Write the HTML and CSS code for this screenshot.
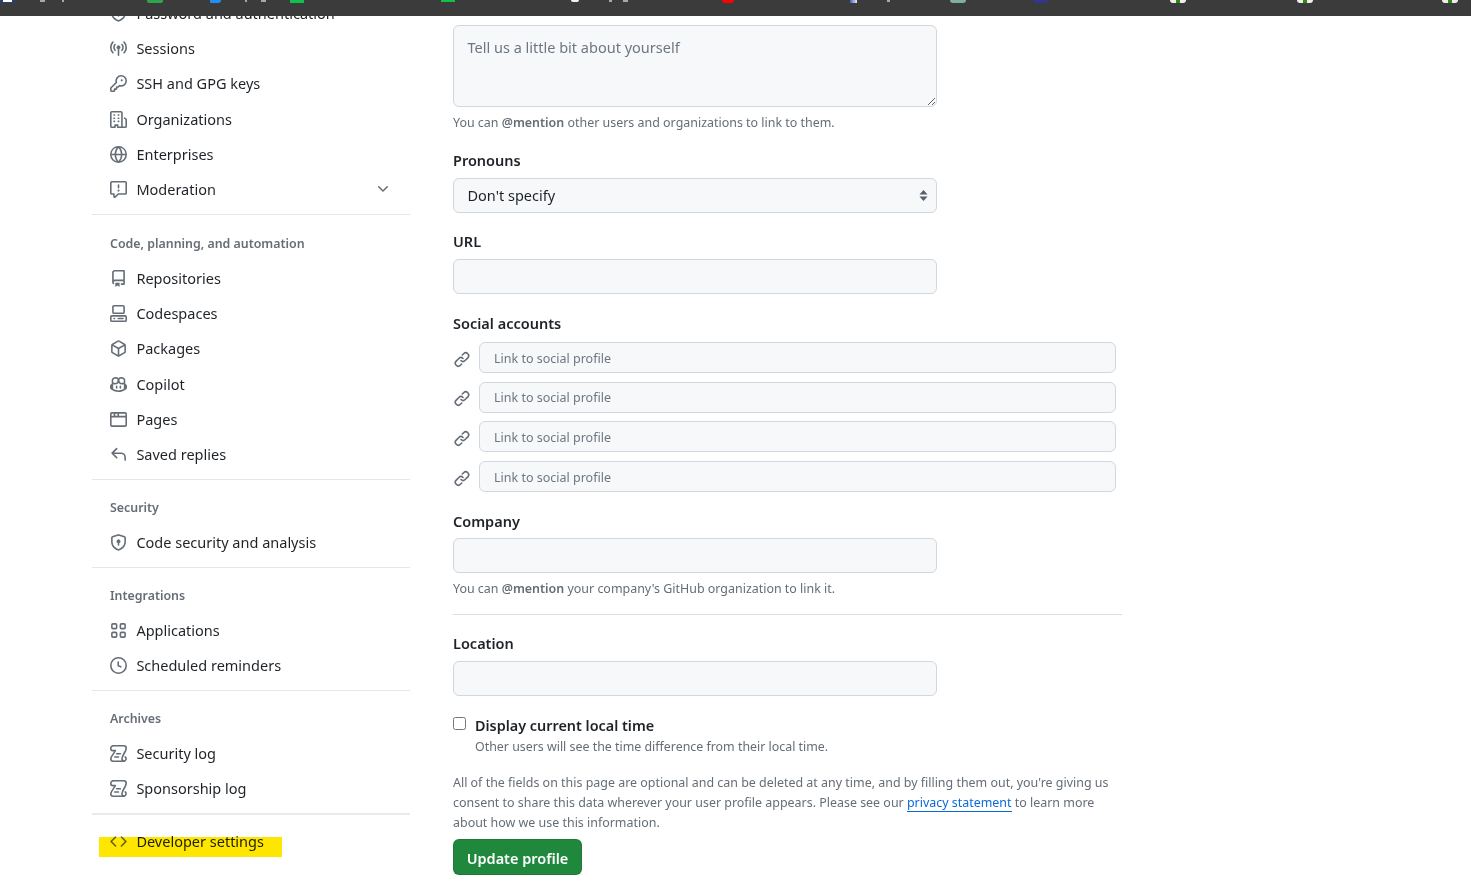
FILE: index.html
```html
<!DOCTYPE html>
<html lang="en">
<head>
<meta charset="utf-8">
<title>Public profile</title>
<link rel="stylesheet" href="styles.css">
</head>
<body>
<svg class="sprite" aria-hidden="true">
  <symbol id="i-shield" viewBox="0 0 16 16"><path d="M7.467.133a1.748 1.748 0 0 1 1.066 0l5.25 1.68A1.75 1.75 0 0 1 15 3.48V7c0 1.566-.32 3.182-1.303 4.682-.983 1.498-2.585 2.813-5.032 3.855a1.697 1.697 0 0 1-1.33 0c-2.447-1.042-4.049-2.357-5.032-3.855C1.32 10.182 1 8.566 1 7V3.48a1.75 1.75 0 0 1 1.217-1.667Zm.61 1.429a.25.25 0 0 0-.153 0l-5.25 1.68a.25.25 0 0 0-.174.238V7c0 1.358.275 2.666 1.057 3.86.784 1.194 2.121 2.34 4.366 3.297a.196.196 0 0 0 .154 0c2.245-.956 3.582-2.104 4.366-3.298C13.225 9.666 13.5 8.36 13.5 7V3.48a.251.251 0 0 0-.174-.237l-5.25-1.68ZM8.75 8.582v1.668a.75.75 0 0 1-1.5 0V8.582a1.75 1.75 0 1 1 1.5 0Z"/></symbol>
  <symbol id="i-broadcast" viewBox="0 0 16 16"><path d="M8.75 8.582v5.668a.75.75 0 0 1-1.5 0V8.582a1.75 1.75 0 1 1 1.5 0Zm3.983-7.125a.75.75 0 0 1 1.06.026A7.976 7.976 0 0 1 16 7c0 2.139-.84 4.083-2.207 5.517a.75.75 0 1 1-1.086-1.034A6.474 6.474 0 0 0 14.5 7a6.474 6.474 0 0 0-1.793-4.483.75.75 0 0 1 .026-1.06Zm-9.466 0a.75.75 0 0 1 .026 1.06A6.474 6.474 0 0 0 1.5 7a6.47 6.47 0 0 0 1.793 4.483.75.75 0 0 1-1.086 1.034A7.973 7.973 0 0 1 0 7c0-2.139.84-4.083 2.207-5.517a.75.75 0 0 1 1.06-.026Zm8.556 2.321A4.988 4.988 0 0 1 13 7a4.988 4.988 0 0 1-1.177 3.222.75.75 0 1 1-1.146-.967A3.487 3.487 0 0 0 11.5 7c0-.86-.309-1.645-.823-2.255a.75.75 0 0 1 1.146-.967Zm-6.492.958A3.48 3.48 0 0 0 4.5 7a3.48 3.48 0 0 0 .823 2.255.75.75 0 0 1-1.146.967A4.981 4.981 0 0 1 3 7a4.98 4.98 0 0 1 1.188-3.236.75.75 0 1 1 1.143.972Z"/></symbol>
  <symbol id="i-key" viewBox="0 0 16 16"><path d="M10.5 0a5.499 5.499 0 1 1-1.288 10.848l-.932.932a.749.749 0 0 1-.53.22H7v.75a.749.749 0 0 1-.22.53l-.5.5a.749.749 0 0 1-.53.22H5v.75a.749.749 0 0 1-.22.53l-.5.5a.749.749 0 0 1-.53.22h-2A1.75 1.75 0 0 1 0 14.25v-2c0-.199.079-.389.22-.53l4.932-4.932A5.5 5.5 0 0 1 10.5 0Zm-4 5.5c-.001.431.069.86.205 1.269a.75.75 0 0 1-.181.768L1.5 12.56v1.69c0 .138.112.25.25.25h1.69l.06-.06v-1.19a.75.75 0 0 1 .75-.75h1.19l.06-.06v-1.19a.75.75 0 0 1 .75-.75h1.19l1.023-1.025a.75.75 0 0 1 .768-.18A4 4 0 1 0 6.5 5.5ZM11 6a1 1 0 1 1 0-2 1 1 0 0 1 0 2Z"/></symbol>
  <symbol id="i-org" viewBox="0 0 16 16"><path d="M1.75 16A1.75 1.75 0 0 1 0 14.25V1.75C0 .784.784 0 1.75 0h8.5C11.216 0 12 .784 12 1.75v12.5c0 .085-.006.168-.018.25h2.268a.25.25 0 0 0 .25-.25V8.285a.25.25 0 0 0-.111-.208l-1.055-.703a.749.749 0 1 1 .832-1.248l1.055.703c.487.325.779.871.779 1.456v5.965A1.75 1.75 0 0 1 14.25 16h-3.5a.766.766 0 0 1-.197-.026c-.099.017-.2.026-.303.026h-3a.75.75 0 0 1-.75-.75V14h-1v1.25a.75.75 0 0 1-.75.75Zm-.25-1.75c0 .138.112.25.25.25H4v-1.25a.75.75 0 0 1 .75-.75h2.5a.75.75 0 0 1 .75.75v1.25h2.25a.25.25 0 0 0 .25-.25V1.75a.25.25 0 0 0-.25-.25h-8.5a.25.25 0 0 0-.25.25ZM3.75 6h.5a.75.75 0 0 1 0 1.5h-.5a.75.75 0 0 1 0-1.5ZM3 3.75A.75.75 0 0 1 3.75 3h.5a.75.75 0 0 1 0 1.5h-.5A.75.75 0 0 1 3 3.75Zm4 3A.75.75 0 0 1 7.75 6h.5a.75.75 0 0 1 0 1.5h-.5A.75.75 0 0 1 7 6.75ZM7.75 3h.5a.75.75 0 0 1 0 1.5h-.5a.75.75 0 0 1 0-1.5ZM3 9.75A.75.75 0 0 1 3.75 9h.5a.75.75 0 0 1 0 1.5h-.5A.75.75 0 0 1 3 9.75ZM7.75 9h.5a.75.75 0 0 1 0 1.5h-.5a.75.75 0 0 1 0-1.5Z"/></symbol>
  <symbol id="i-globe" viewBox="0 0 16 16"><path d="M8 0a8 8 0 1 1 0 16A8 8 0 0 1 8 0ZM5.78 8.75a9.64 9.64 0 0 0 1.363 4.177c.255.426.542.832.857 1.215.245-.296.551-.705.857-1.215A9.64 9.64 0 0 0 10.22 8.75Zm4.44-1.5a9.64 9.64 0 0 0-1.363-4.177c-.307-.51-.612-.919-.857-1.215a9.927 9.927 0 0 0-.857 1.215A9.64 9.64 0 0 0 5.78 7.25Zm-5.944 1.5H1.543a6.507 6.507 0 0 0 4.666 5.5c-.123-.181-.24-.365-.352-.552-.715-1.192-1.437-2.874-1.581-4.948Zm-2.733-1.5h2.733c.144-2.074.866-3.756 1.58-4.948.12-.197.237-.381.353-.552a6.507 6.507 0 0 0-4.666 5.5Zm10.181 1.5c-.144 2.074-.866 3.756-1.58 4.948-.12.197-.237.381-.353.552a6.507 6.507 0 0 0 4.666-5.5Zm2.733-1.5a6.507 6.507 0 0 0-4.666-5.5c.123.181.24.365.353.552.714 1.192 1.436 2.874 1.58 4.948Z"/></symbol>
  <symbol id="i-report" viewBox="0 0 16 16"><path d="M0 1.75C0 .784.784 0 1.75 0h12.5C15.216 0 16 .784 16 1.75v9.5A1.75 1.75 0 0 1 14.25 13H8.06l-2.573 2.573A1.458 1.458 0 0 1 3 14.543V13H1.75A1.75 1.75 0 0 1 0 11.25Zm1.75-.25a.25.25 0 0 0-.25.25v9.5c0 .138.112.25.25.25h2a.75.75 0 0 1 .75.75v2.19l2.72-2.72a.749.749 0 0 1 .53-.22h6.5a.25.25 0 0 0 .25-.25v-9.5a.25.25 0 0 0-.25-.25Zm7 2.25v2.5a.75.75 0 0 1-1.5 0v-2.5a.75.75 0 0 1 1.5 0ZM9 9a1 1 0 1 1-2 0 1 1 0 0 1 2 0Z"/></symbol>
  <symbol id="i-chevron" viewBox="0 0 16 16"><path d="M12.78 5.22a.749.749 0 0 1 0 1.06l-4.25 4.25a.749.749 0 0 1-1.06 0L3.22 6.28a.749.749 0 1 1 1.06-1.06L8 8.939l3.72-3.719a.749.749 0 0 1 1.06 0Z"/></symbol>
  <symbol id="i-repo" viewBox="0 0 16 16"><path d="M2 2.5A2.5 2.5 0 0 1 4.5 0h8.75a.75.75 0 0 1 .75.75v12.5a.75.75 0 0 1-.75.75h-2.5a.75.75 0 0 1 0-1.5h1.75v-2h-8a1 1 0 0 0-.714 1.7.75.75 0 1 1-1.072 1.05A2.495 2.495 0 0 1 2 11.5Zm10.5-1h-8a1 1 0 0 0-1 1v6.708A2.486 2.486 0 0 1 4.5 9h8ZM5 12.25a.25.25 0 0 1 .25-.25h3.5a.25.25 0 0 1 .25.25v3.25a.25.25 0 0 1-.4.2l-1.45-1.087a.249.249 0 0 0-.3 0L5.4 15.7a.25.25 0 0 1-.4-.2Z"/></symbol>
  <symbol id="i-codespaces" viewBox="0 0 16 16"><path d="M0 11.25c0-.966.784-1.75 1.75-1.75h12.5c.966 0 1.75.784 1.75 1.75v3A1.75 1.75 0 0 1 14.25 16H1.75A1.75 1.75 0 0 1 0 14.25Zm2-9.5C2 .784 2.784 0 3.75 0h8.5C13.216 0 14 .784 14 1.75v5a1.75 1.75 0 0 1-1.75 1.75h-8.5A1.75 1.75 0 0 1 2 6.75Zm1.75-.25a.25.25 0 0 0-.25.25v5c0 .138.112.25.25.25h8.5a.25.25 0 0 0 .25-.25v-5a.25.25 0 0 0-.25-.25Zm-2 9.5a.25.25 0 0 0-.25.25v3c0 .138.112.25.25.25h12.5a.25.25 0 0 0 .25-.25v-3a.25.25 0 0 0-.25-.25Z"/><path d="M7 12.75a.75.75 0 0 1 .75-.75h4.5a.75.75 0 0 1 0 1.5h-4.5a.75.75 0 0 1-.75-.75Zm-4 0a.75.75 0 0 1 .75-.75h.5a.75.75 0 0 1 0 1.5h-.5a.75.75 0 0 1-.75-.75Z"/></symbol>
  <symbol id="i-package" viewBox="0 0 16 16"><path d="m8.878.392 5.25 3.045c.54.314.872.89.872 1.514v6.098a1.75 1.75 0 0 1-.872 1.514l-5.25 3.045a1.75 1.75 0 0 1-1.756 0l-5.25-3.045A1.75 1.75 0 0 1 1 11.049V4.951c0-.624.332-1.201.872-1.514L7.122.392a1.75 1.75 0 0 1 1.756 0ZM7.875 1.69l-4.63 2.685L8 7.133l4.755-2.758-4.63-2.685a.248.248 0 0 0-.25 0ZM2.5 5.677v5.372c0 .09.047.171.125.216l4.625 2.683V8.432Zm6.25 8.271 4.625-2.683a.25.25 0 0 0 .125-.216V5.677L8.75 8.432Z"/></symbol>
  <symbol id="i-copilot" viewBox="0 0 16 16"><path d="M7.998 15.035c-4.562 0-7.873-2.914-7.998-3.749V9.338c.085-.628.677-1.686 1.588-2.065.013-.07.024-.143.036-.218.029-.183.06-.384.126-.612-.201-.508-.254-1.084-.254-1.656 0-.87.128-1.769.693-2.484.579-.733 1.494-1.124 2.724-1.261 1.206-.134 2.262.034 2.944.765.05.053.096.108.139.165.044-.057.094-.112.143-.165.682-.731 1.738-.899 2.944-.765 1.23.137 2.145.528 2.724 1.261.566.715.693 1.614.693 2.484 0 .572-.053 1.148-.254 1.656.066.228.098.429.126.612.012.076.024.148.037.218.924.385 1.522 1.471 1.591 2.095v1.872c0 .766-3.351 3.795-8.002 3.795Zm0-1.485c2.28 0 4.584-1.11 5.002-1.433V7.862l-.023-.116c-.49.21-1.075.291-1.727.291-1.146 0-2.059-.327-2.71-.991A3.222 3.222 0 0 1 8 6.303a3.24 3.24 0 0 1-.544.743c-.65.664-1.563.991-2.71.991-.652 0-1.236-.081-1.727-.291l-.023.116v4.255c.419.323 2.722 1.433 5.002 1.433ZM6.762 2.83c-.193-.206-.637-.413-1.682-.297-1.019.113-1.479.404-1.713.7-.247.312-.369.789-.369 1.554 0 .793.129 1.171.308 1.371.162.181.519.379 1.442.379.853 0 1.339-.235 1.638-.54.315-.322.527-.827.617-1.553.117-.935-.037-1.395-.241-1.614Zm4.155-.297c-1.044-.116-1.488.091-1.681.297-.204.219-.359.679-.242 1.614.091.726.303 1.231.618 1.553.299.305.784.54 1.638.54.922 0 1.28-.198 1.442-.379.179-.2.308-.578.308-1.371 0-.765-.123-1.242-.37-1.554-.233-.296-.693-.587-1.713-.7Z"/><path d="M6.25 9.037a.75.75 0 0 1 .75.75v1.501a.75.75 0 0 1-1.5 0V9.787a.75.75 0 0 1 .75-.75Zm4.25.75v1.501a.75.75 0 0 1-1.5 0V9.787a.75.75 0 0 1 1.5 0Z"/></symbol>
  <symbol id="i-browser" viewBox="0 0 16 16"><path d="M0 2.75C0 1.784.784 1 1.75 1h12.5c.966 0 1.75.784 1.75 1.75v10.5A1.75 1.75 0 0 1 14.25 15H1.75A1.75 1.75 0 0 1 0 13.25ZM14.5 6h-13v7.25c0 .138.112.25.25.25h12.5a.25.25 0 0 0 .25-.25Zm-6-3.5v2h6V2.75a.25.25 0 0 0-.25-.25ZM5 2.5v2h2v-2Zm-3.25 0a.25.25 0 0 0-.25.25V4.5h2v-2Z"/></symbol>
  <symbol id="i-reply" viewBox="0 0 16 16"><path d="M6.78 1.97a.75.75 0 0 1 0 1.06L3.81 6h6.44A4.75 4.75 0 0 1 15 10.75v2.5a.75.75 0 0 1-1.5 0v-2.5a3.25 3.25 0 0 0-3.25-3.25H3.81l2.97 2.97a.749.749 0 0 1-.326 1.275.749.749 0 0 1-.734-.215L1.47 7.28a.75.75 0 0 1 0-1.06l4.25-4.25a.75.75 0 0 1 1.06 0Z"/></symbol>
  <symbol id="i-apps" viewBox="0 0 16 16"><g fill="none" stroke="currentColor" stroke-width="1.5"><rect x="1.75" y="1.75" width="4.5" height="4.5" rx="1"/><rect x="9.75" y="1.75" width="4.5" height="4.5" rx="1"/><rect x="1.75" y="9.75" width="4.5" height="4.5" rx="1"/><rect x="9.75" y="9.75" width="4.5" height="4.5" rx="1"/></g></symbol>
  <symbol id="i-clock" viewBox="0 0 16 16"><path d="M8 0a8 8 0 1 1 0 16A8 8 0 0 1 8 0ZM1.5 8a6.5 6.5 0 1 0 13 0 6.5 6.5 0 0 0-13 0Zm7-3.25v2.992l2.028.812a.75.75 0 0 1-.557 1.392l-2.5-1A.751.751 0 0 1 7 8.25v-3.5a.75.75 0 0 1 1.5 0Z"/></symbol>
  <symbol id="i-log" viewBox="0 0 16 16"><g fill="none" stroke="currentColor" stroke-width="1.5" stroke-linecap="round" stroke-linejoin="round"><path d="M3 .75h10a2.25 2.25 0 0 1 2.25 2.25c0 3.2-4 6.8-4 10a2.25 2.25 0 0 0 2 2.25 2.25 2.25 0 0 0 1-4"/><path d="M13.25 15.25H3A2.25 2.25 0 0 1 .75 13c0-2.5 3.2-5 4.3-7.75H2.6C1.5 5.25.75 4.2.75 3A2.25 2.25 0 0 1 3 .75"/><path d="M6.25 8.25h3.5M4.5 11.25h3.5"/></g></symbol>
  <symbol id="i-code" viewBox="0 0 16 16"><path d="m11.28 3.22 4.25 4.25a.75.75 0 0 1 0 1.06l-4.25 4.25a.749.749 0 0 1-1.275-.326.749.749 0 0 1 .215-.734L13.94 8l-3.72-3.72a.749.749 0 0 1 .326-1.275.749.749 0 0 1 .734.215Zm-6.56 0a.751.751 0 0 1 1.042.018.751.751 0 0 1 .018 1.042L2.06 8l3.72 3.72a.749.749 0 0 1-.326 1.275.749.749 0 0 1-.734-.215L.47 8.53a.75.75 0 0 1 0-1.06Z"/></symbol>
  <symbol id="i-link" viewBox="0 0 16 16"><path d="m7.775 3.275 1.25-1.25a3.5 3.5 0 1 1 4.95 4.95l-2.5 2.5a3.5 3.5 0 0 1-4.95 0 .751.751 0 0 1 .018-1.042.751.751 0 0 1 1.042-.018 1.998 1.998 0 0 0 2.83 0l2.5-2.5a2.002 2.002 0 0 0-2.83-2.83l-1.25 1.25a.751.751 0 0 1-1.042-.018.751.751 0 0 1-.018-1.042Zm-4.69 9.64a1.998 1.998 0 0 0 2.83 0l1.25-1.25a.751.751 0 0 1 1.042.018.751.751 0 0 1 .018 1.042l-1.25 1.25a3.5 3.5 0 1 1-4.95-4.95l2.5-2.5a3.5 3.5 0 0 1 4.95 0 .751.751 0 0 1-.018 1.042.751.751 0 0 1-1.042.018 1.998 1.998 0 0 0-2.83 0l-2.5 2.5a1.998 1.998 0 0 0 0 2.83Z"/></symbol>
</svg>

<div class="bar" aria-hidden="true">
  <i class="fav f1"></i><i class="speck s1"></i><i class="speck s2"></i>
  <i class="fav f2"></i><i class="fav f3"></i><i class="speck s3"></i><i class="speck s4"></i>
  <i class="fav f4"></i><i class="fav f5"></i><i class="fav f6"></i>
  <i class="speck s5"></i><i class="speck s6"></i>
  <i class="fav f7"></i><i class="fav f8"></i><i class="speck s7"></i>
  <i class="fav f9"></i><i class="fav f10"></i>
  <i class="fav f11"></i><i class="fav f12"></i><i class="fav f13"></i>
</div>

<main class="page">
  <nav class="sidebar">
    <a class="item"><svg class="ico"><use href="#i-shield"/></svg>Password and authentication</a>
    <a class="item"><svg class="ico"><use href="#i-broadcast"/></svg>Sessions</a>
    <a class="item"><svg class="ico"><use href="#i-key"/></svg>SSH and GPG keys</a>
    <a class="item"><svg class="ico"><use href="#i-org"/></svg>Organizations</a>
    <a class="item"><svg class="ico"><use href="#i-globe"/></svg>Enterprises</a>
    <a class="item"><svg class="ico"><use href="#i-report"/></svg>Moderation<svg class="ico chev"><use href="#i-chevron"/></svg></a>
    <hr class="rule rule-first">
    <h3 class="heading">Code, planning, and automation</h3>
    <a class="item"><svg class="ico"><use href="#i-repo"/></svg>Repositories</a>
    <a class="item"><svg class="ico"><use href="#i-codespaces"/></svg>Codespaces</a>
    <a class="item"><svg class="ico"><use href="#i-package"/></svg>Packages</a>
    <a class="item"><svg class="ico"><use href="#i-copilot"/></svg>Copilot</a>
    <a class="item"><svg class="ico"><use href="#i-browser"/></svg>Pages</a>
    <a class="item"><svg class="ico"><use href="#i-reply"/></svg>Saved replies</a>
    <hr class="rule">
    <h3 class="heading">Security</h3>
    <a class="item"><svg class="ico"><use href="#i-shield"/></svg>Code security and analysis</a>
    <hr class="rule">
    <h3 class="heading">Integrations</h3>
    <a class="item"><svg class="ico"><use href="#i-apps"/></svg>Applications</a>
    <a class="item"><svg class="ico"><use href="#i-clock"/></svg>Scheduled reminders</a>
    <hr class="rule">
    <h3 class="heading">Archives</h3>
    <a class="item"><svg class="ico"><use href="#i-log"/></svg>Security log</a>
    <a class="item"><svg class="ico"><use href="#i-log"/></svg>Sponsorship log</a>
    <hr class="rule rule-thick">
    <a class="item item-dev"><svg class="ico"><use href="#i-code"/></svg>Developer settings<span class="marker"></span></a>
  </nav>

  <form class="form">
    <textarea class="control area" placeholder="Tell us a little bit about yourself"></textarea>
    <p class="note">You can <strong>@mention</strong> other users and organizations to link to them.</p>

    <label class="label label-pronouns">Pronouns</label>
    <div class="select-wrap">
      <select class="control select"><option>Don't specify</option></select>
      <svg class="arrows" viewBox="0 0 10 14"><path d="M5 1 9.5 6h-9zM5 13 .5 8h9z"/></svg>
    </div>

    <label class="label label-url">URL</label>
    <input class="control" type="text">

    <label class="label label-social">Social accounts</label>
    <div class="socials">
      <div class="social"><svg class="ico"><use href="#i-link"/></svg><input class="control small" placeholder="Link to social profile"></div>
      <div class="social"><svg class="ico"><use href="#i-link"/></svg><input class="control small" placeholder="Link to social profile"></div>
      <div class="social"><svg class="ico"><use href="#i-link"/></svg><input class="control small" placeholder="Link to social profile"></div>
      <div class="social"><svg class="ico"><use href="#i-link"/></svg><input class="control small" placeholder="Link to social profile"></div>
    </div>

    <label class="label label-company">Company</label>
    <input class="control" type="text">
    <p class="note">You can <strong>@mention</strong> your company's GitHub organization to link it.</p>

    <hr class="divider">

    <label class="label">Location</label>
    <input class="control" type="text">

    <div class="check">
      <input class="box" type="checkbox">
      <div>
        <label class="check-label">Display current local time</label>
        <p class="check-note">Other users will see the time difference from their local time.</p>
      </div>
    </div>

    <p class="legal">All of the fields on this page are optional and can be deleted at any time, and by filling them out, you're giving us consent to share this data wherever your user profile appears. Please see our <a class="link">privacy statement</a> to learn more about how we use this information.</p>

    <button class="btn" type="button">Update profile</button>
  </form>
</main>
</body>
</html>
```

FILE: styles.css
```css
* { box-sizing: border-box; }

html, body {
  margin: 0;
  height: 881px;
  overflow: hidden;
  background: #fff;
}

body {
  font-family: "Noto Sans", "Open Sans", sans-serif;
  font-size: 14px;
  color: #1f2328;
}

.sprite { display: none; }

/* browser bookmark bar, cropped at the top of the shot */
.bar {
  position: relative;
  z-index: 2;
  display: flex;
  align-items: flex-start;
  height: 16px;
  background: #3b3b3b;
}

.fav { display: block; flex: none; height: 3px; }
.speck { display: block; flex: none; width: 3px; height: 2px; background: #a8a8a8; }

.f1 { width: 15px; background: #fff; border: solid #26406f; border-width: 0 3px 1px; }
.s1 { margin-left: 25px; width: 5px; }
.s2 { margin-left: 17px; width: 2px; }
.f2 { margin-left: 83px; width: 16px; background: #2ea44f; border-radius: 0 0 2px 2px; }
.f3 { margin-left: 47px; width: 11px; background: #1e90f5; border-radius: 0 0 5px 2px; }
.s3 { margin-left: 24px; width: 2px; }
.s4 { margin-left: 14px; width: 5px; }
.f4 { margin-left: 24px; width: 14px; background: #0fc04a; }
.f5 { margin-left: 137px; width: 14px; height: 2px; background: #0fc04a; }
.f6 { margin-left: 116px; width: 8px; height: 2px; background: #f2f2f2; border-radius: 0 0 4px 4px; }
.s5 { margin-left: 30px; }
.s6 { margin-left: 11px; width: 5px; }
.f7 { margin-left: 94px; width: 12px; height: 3px; background: #f00; border-radius: 0 0 6px 6px; }
.f8 { margin-left: 116px; width: 7px; background: linear-gradient(90deg, #3f5fc0, #e8e8e8); }
.s7 { margin-left: 30px; }
.f9 { margin-left: 60px; width: 16px; background: #7fb09c; border-radius: 0 0 3px 3px; }
.f10 { margin-left: 67px; width: 15px; background: #35358f; border-radius: 0 0 3px 3px; }
.f11, .f12, .f13 {
  width: 16px;
  background: linear-gradient(90deg, #eee 40%, #2a8a12 40%, #2a8a12 60%, #eee 60%);
  border-radius: 0 0 3px 3px;
}
.f11 { margin-left: 122px; }
.f12 { margin-left: 111px; }
.f13 { margin-left: 129px; }

.page {
  display: flex;
  align-items: flex-start;
  padding-left: 92px;
}

/* sidebar */
.sidebar {
  flex: none;
  width: 318px;
  margin-top: -20.8px;
}

.item {
  position: relative;
  display: flex;
  align-items: center;
  gap: 9.4px;
  height: 35.3px;
  padding: 0 19px 0 18px;
  font-size: 14.5px;
  color: #1f2328;
}

.ico {
  flex: none;
  width: 17px;
  height: 17px;
  margin-top: 1px;
  fill: #656d76;
  color: #656d76;
}

.chev { margin-left: auto; margin-top: 0; width: 16px; height: 16px; }

.rule {
  height: 1px;
  margin: 7px 0 0;
  border: 0;
  background: #e3e7eb;
}

.rule-first { margin-top: 7.5px; }

.rule-thick { height: 2px; margin-top: 7.5px; background: #e7ecf0; }

.heading {
  height: 24px;
  margin: 16.5px 0 4px;
  padding-left: 18px;
  font-size: 12.4px;
  font-weight: 600;
  line-height: 24px;
  color: #656d76;
}

.item-dev { margin-top: 8.5px; }

.marker {
  position: absolute;
  left: 7px;
  top: 13.5px;
  width: 183px;
  height: 20px;
  background: #ffe600;
  mix-blend-mode: multiply;
}

/* form */
.form {
  flex: none;
  width: 669px;
  margin-left: 43px;
  padding-top: 9px;
}

.control {
  display: block;
  width: 484px;
  height: 35px;
  padding: 0 13.5px;
  font: inherit;
  font-size: 14.5px;
  color: #1f2328;
  background: #f6f8fa;
  border: 1px solid #d0d7de;
  border-radius: 6px;
  outline: none;
}

.control::placeholder { color: #6e7781; opacity: 1; }

.area {
  height: 82px;
  padding-top: 11px;
  line-height: 20px;
}

.note {
  margin: 6px 0 0;
  font-size: 12.45px;
  line-height: 20px;
  color: #656d76;
}

.note strong { font-weight: 600; }

.label {
  display: block;
  height: 20px;
  margin: 18px 0 8px;
  font-size: 14.5px;
  font-weight: 600;
  line-height: 20px;
}

.label-pronouns { margin: 17px 0 8px; }
.label-url { margin: 18px 0 8px; }
.label-social { margin: 19px 0 9px; }
.label-company { margin: 19px 0 7px; }

.select-wrap { position: relative; width: 484px; }
.select { appearance: none; padding-bottom: 2px; }

.arrows {
  position: absolute;
  right: 9px;
  top: 11px;
  width: 9px;
  height: 13px;
  fill: #57606a;
}

.socials {
  display: flex;
  flex-direction: column;
  gap: 8.7px;
}

.social {
  display: flex;
  align-items: center;
  gap: 9px;
}

.social .ico { margin-top: 3px; transform: translateX(.5px); }

.small {
  flex: none;
  width: 637px;
  height: 31px;
  padding: 1px 14px 0;
  font-size: 12.5px;
}

.divider {
  height: 1px;
  margin: 15px 0 0;
  border: 0;
  background: #d8dee4;
}

.check {
  display: flex;
  gap: 9px;
  margin-top: 19px;
}

.box {
  flex: none;
  width: 13px;
  height: 13px;
  margin: 2px 0 0;
}

.check-label {
  display: block;
  padding-top: 1px;
  font-size: 14.4px;
  font-weight: 600;
  line-height: 20px;
}

.check-note {
  margin: 1px 0 0;
  font-size: 12.4px;
  line-height: 20px;
  color: #656d76;
}

.legal {
  margin: 16px 0 0;
  font-size: 12.45px;
  line-height: 20px;
  color: #656d76;
}

.link {
  color: #0969da;
  border-bottom: 1px solid #0969da;
}

.btn {
  display: block;
  width: 129px;
  height: 36px;
  margin-top: 6px;
  padding: 1px 0 0;
  font: inherit;
  font-size: 14.5px;
  font-weight: 600;
  color: #fff;
  background: #1f883d;
  border: 1px solid rgba(31, 35, 40, .15);
  border-radius: 6px;
}
```
